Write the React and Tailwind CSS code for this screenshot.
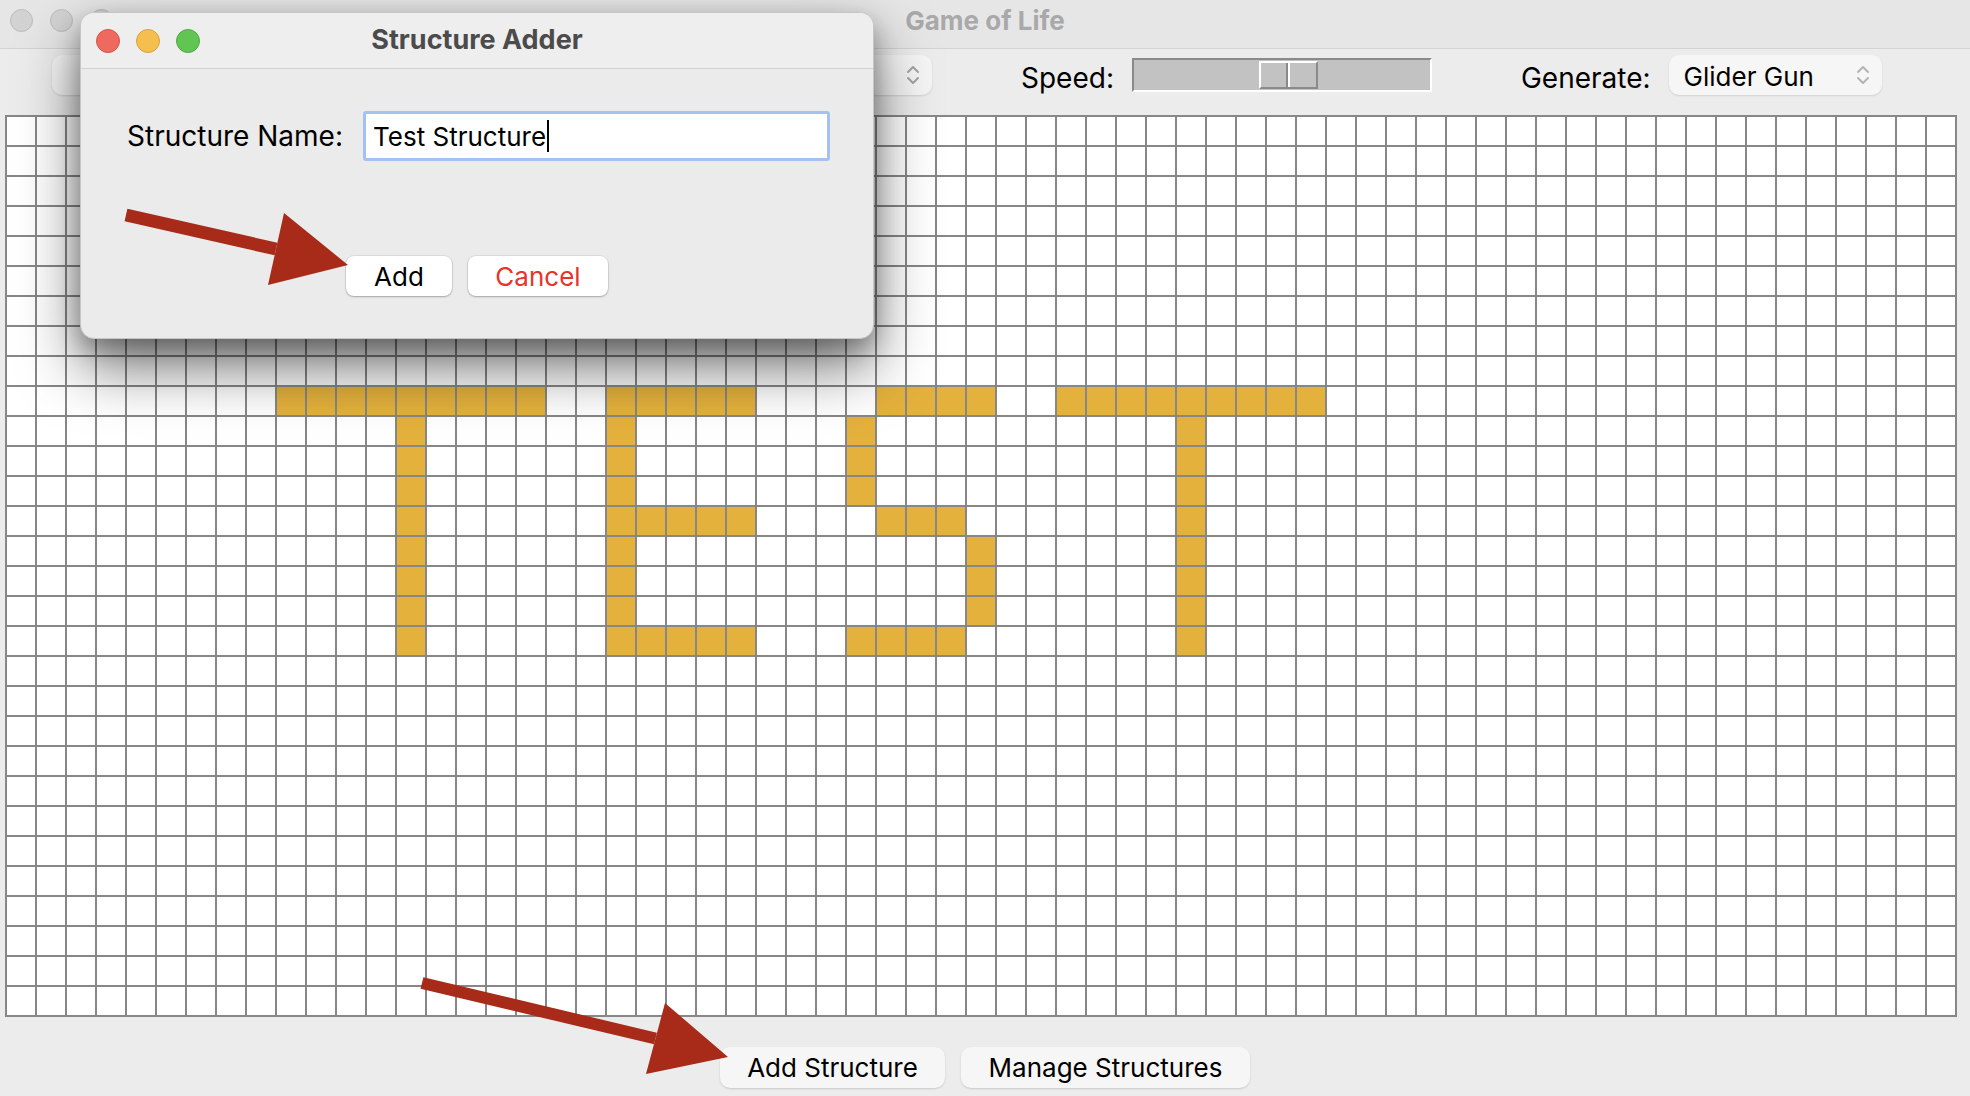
import React from 'react';

const COLS = 65;
const ROWS = 30;

// live cells that spell "TEST" on the board
const liveCells = (() => {
  const cells = new Set();
  const add = (r, c) => cells.add(`${r}-${c}`);
  const hline = (r, c0, c1) => { for (let c = c0; c <= c1; c++) add(r, c); };
  const vline = (c, r0, r1) => { for (let r = r0; r <= r1; r++) add(r, c); };
  // T
  hline(9, 9, 17); vline(13, 10, 17);
  // E
  vline(20, 9, 17); hline(9, 20, 24); hline(13, 20, 24); hline(17, 20, 24);
  // S
  hline(9, 29, 32); vline(28, 10, 12); hline(13, 29, 31); vline(32, 14, 16); hline(17, 28, 31);
  // T
  hline(9, 35, 43); vline(39, 10, 17);
  return cells;
})();

const Chevrons = ({ color = '#b4b4b4' }) => (
  <svg width="14" height="22" viewBox="0 0 14 22" fill="none" stroke={color} strokeWidth="2" strokeLinecap="round" strokeLinejoin="round">
    <polyline points="2,8 7,3 12,8" />
    <polyline points="2,14 7,19 12,14" />
  </svg>
);

const GrayLight = () => (
  <span className="block h-[23px] w-[23px] rounded-full border border-[#bcbcbc] bg-[#d3d3d3]" />
);

function Board() {
  const cells = [];
  for (let r = 0; r < ROWS; r++) {
    for (let c = 0; c < COLS; c++) {
      const alive = liveCells.has(`${r}-${c}`);
      cells.push(
        <div key={`${r}-${c}`} className={alive ? 'bg-[#e4b13c]' : 'bg-white'} />
      );
    }
  }
  return (
    <div className="ml-[5px] grid w-fit grid-cols-[repeat(65,28px)] grid-rows-[repeat(30,28px)] gap-[2px] border-2 border-[#878787] bg-[#878787]">
      {cells}
    </div>
  );
}

function Dialog() {
  return (
    <div className="absolute left-[80px] top-[12px] h-[327px] w-[794px] overflow-hidden rounded-[14px] border border-[#c6c6c6] bg-[#ebebeb] shadow-[0_28px_60px_rgba(0,0,0,0.55),0_10px_22px_rgba(0,0,0,0.25)]">
      {/* title bar */}
      <div className="grid h-[56px] grid-cols-[1fr_auto_1fr] items-center border-b border-[#d2d2d2] bg-[#efeeef] px-[15px]">
        <div className="flex gap-[16px]">
          <span className="block h-[24px] w-[24px] rounded-full border border-[#d4534a] bg-[#ee6a5f]" />
          <span className="block h-[24px] w-[24px] rounded-full border border-[#d9a23f] bg-[#f5bf50]" />
          <span className="block h-[24px] w-[24px] rounded-full border border-[#4fa843] bg-[#61c554]" />
        </div>
        <div className="text-[27px] font-bold text-[#4b4b4b]">Structure Adder</div>
        <div />
      </div>

      <div className="px-[46px] pt-[42px]">
        <div className="flex items-center">
          <span className="w-[216px] shrink-0 whitespace-nowrap text-[28px]">Structure Name:</span>
          <div className="ml-[20px] flex h-[50px] w-[467px] shrink-0 items-center rounded-[3px] border-[3px] border-[#a4c2ef] bg-white pl-[7px] text-[26px]">
            Test Structure
            <span className="ml-[1px] block h-[32px] w-[2px] bg-black" />
          </div>
        </div>

        <div className="mt-[95px] flex gap-[16px] pl-[219px]">
          <button className="flex h-[40px] w-[106px] items-center justify-center rounded-[8px] bg-white text-[26px] text-black shadow-[0_1px_2px_rgba(0,0,0,0.25),0_0_0_1px_rgba(0,0,0,0.06)]">
            Add
          </button>
          <button className="flex h-[40px] w-[140px] items-center justify-center rounded-[8px] bg-white text-[26px] text-[#e8332a] shadow-[0_1px_2px_rgba(0,0,0,0.25),0_0_0_1px_rgba(0,0,0,0.06)]">
            Cancel
          </button>
        </div>
      </div>
    </div>
  );
}

export default function App() {
  return (
    <div className="relative h-[1096px] w-[1970px] overflow-hidden bg-[#ececec] font-['Inter',sans-serif] text-black">
      {/* window title bar */}
      <div className="grid h-[49px] grid-cols-[1fr_auto_1fr] items-start border-b border-[#d3d3d3] bg-[#e7e6e7] px-[10px] pt-[8px]">
        <div className="flex h-[24px] items-center gap-[17px]">
          <GrayLight />
          <GrayLight />
          <GrayLight />
        </div>
        <div className="flex h-[24px] items-center text-[26px] font-bold text-[#a9a9a9]">Game of Life</div>
        <div />
      </div>

      {/* toolbar */}
      <div className="flex h-[66px] items-center pb-[14px] pl-[52px]">
        <div className="flex h-[40px] w-[880px] items-center justify-end rounded-[10px] bg-[#f5f5f5] pr-[12px] shadow-[0_1px_2px_rgba(0,0,0,0.12)]">
          <Chevrons color="#a3a3a3" />
        </div>

        <span className="ml-[89px] mt-[5px] text-[28px]">Speed:</span>
        <div className="ml-[18px] flex h-[34px] w-[300px] items-center border-2 border-b-white border-l-[#8a8a8a] border-r-white border-t-[#8a8a8a] bg-[#c2c2c2] pl-[125px]">
          <div className="flex h-[28px] w-[59px] border-2 border-b-[#8a8a8a] border-l-white border-r-[#8a8a8a] border-t-white">
            <div className="flex-1 border-r-2 border-[#8a8a8a]" />
            <div className="flex-1 border-l-2 border-white" />
          </div>
        </div>

        <span className="ml-[89px] mt-[5px] text-[28px]">Generate:</span>
        <div className="ml-[18px] flex h-[40px] w-[213px] items-center justify-between rounded-[10px] bg-[#f6f6f6] pl-[15px] pr-[12px] text-[26px] shadow-[0_1px_2px_rgba(0,0,0,0.12)]">
          <span className="mt-[2px]">Glider Gun</span>
          <Chevrons />
        </div>
      </div>

      <Board />

      {/* bottom buttons */}
      <div className="flex justify-center gap-[16px] pt-[30px]">
        <button className="flex h-[41px] w-[225px] items-center justify-center rounded-[10px] bg-[#f6f6f6] text-[26px] shadow-[0_1px_2px_rgba(0,0,0,0.15)]">
          Add Structure
        </button>
        <button className="flex h-[41px] w-[289px] items-center justify-center rounded-[10px] bg-[#f6f6f6] text-[26px] shadow-[0_1px_2px_rgba(0,0,0,0.15)]">
          Manage Structures
        </button>
      </div>

      <Dialog />

      {/* annotation arrows */}
      <svg className="pointer-events-none absolute left-0 top-0" width="1970" height="1096" viewBox="0 0 1970 1096">
        <g fill="#a72b18">
          <polygon points="127.4,208.7 124.6,221.3 274.6,255.3 277.4,242.7" />
          <polygon points="284,213 348,265 268,285" />
          <polygon points="423.4,977.2 420.6,988.8 654.1,1044.3 656.9,1032.7" />
          <polygon points="665,1003 728,1057 646,1074" />
        </g>
      </svg>
    </div>
  );
}
